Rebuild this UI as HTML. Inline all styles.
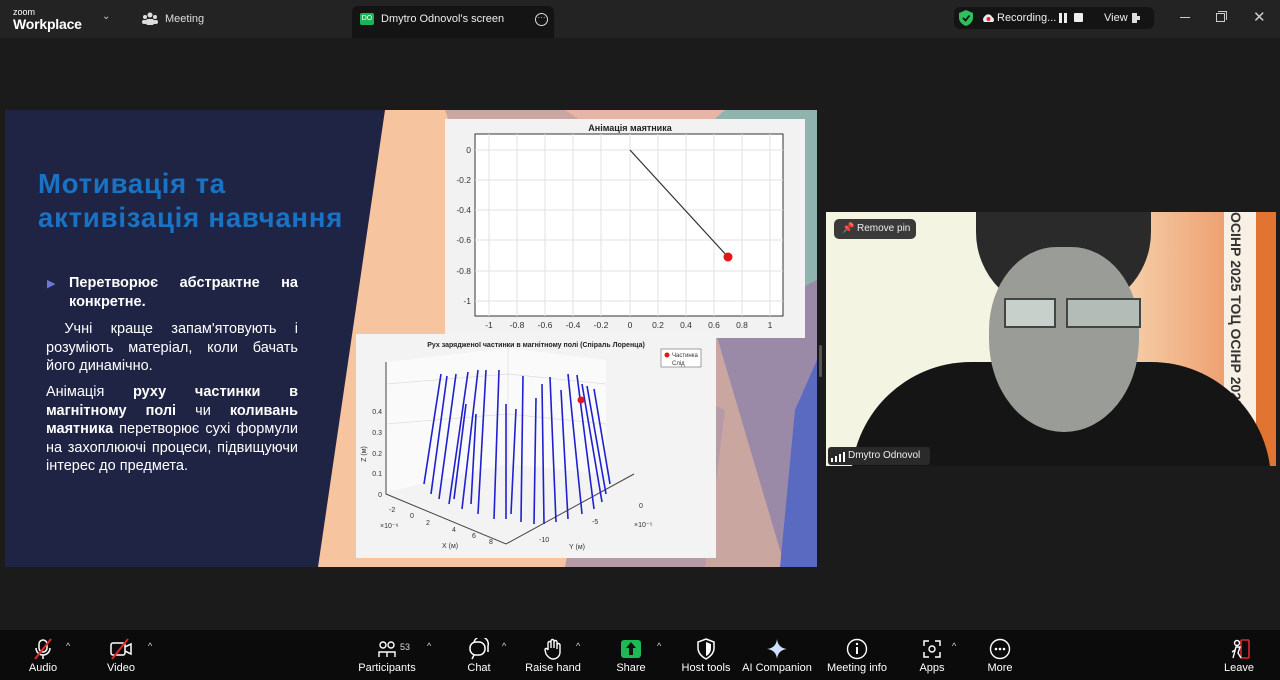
<!DOCTYPE html>
<html><head><meta charset="utf-8"><style>
*{margin:0;padding:0;box-sizing:border-box}
body{width:1280px;height:680px;background:#1b1b1b;font-family:"Liberation Sans",sans-serif;position:relative;overflow:hidden;color:#fff}
.top{position:absolute;left:0;top:0;width:1280px;height:38px;background:#232323}
.abs{position:absolute}
.bot{position:absolute;left:0;top:630px;width:1280px;height:50px;background:#0b0b0b}
.tb{position:absolute;top:662px;font-size:11px;color:#fff;text-align:center;transform:translateX(-50%);white-space:nowrap}
.ic{position:absolute;top:638px;transform:translateX(-50%)}
.car{position:absolute;top:641px;font-size:9px;color:#ddd}
.slide{position:absolute;left:5px;top:110px;width:812px;height:457px;overflow:hidden;background:#f7c4a0}
.txt{position:absolute;left:46px;width:252px;font-size:14.5px;line-height:18.5px;color:#fff;text-align:justify}
</style></head><body>
<div class="top"></div>
<div class="abs" style="left:13px;top:7px;font-size:9px;color:#fff">zoom</div>
<div class="abs" style="left:13px;top:16px;font-size:14px;color:#fff;font-weight:bold;letter-spacing:-.2px">Workplace</div>
<div class="abs" style="left:102px;top:11px;font-size:10px;color:#ccc">⌄</div>
<svg class="abs" style="left:142px;top:12px" width="16" height="14"><circle cx="8" cy="3" r="2.5" fill="#ddd"/><circle cx="3" cy="5" r="2" fill="#ddd"/><circle cx="13" cy="5" r="2" fill="#ddd"/><rect x="4" y="7" width="8" height="6" rx="2" fill="#ddd"/><rect x="0" y="8" width="5" height="4" rx="2" fill="#ddd"/><rect x="11" y="8" width="5" height="4" rx="2" fill="#ddd"/></svg>
<div class="abs" style="left:165px;top:13px;font-size:11px;color:#ddd">Meeting</div>
<div class="abs" style="left:352px;top:6px;width:202px;height:32px;background:#141414;border-radius:6px 6px 0 0"></div>
<div class="abs" style="left:360px;top:13px;width:14px;height:12px;background:#1fb05a;border-radius:2px;font-size:7px;color:#fff;text-align:center;line-height:12px">DO</div>
<div class="abs" style="left:381px;top:13px;font-size:11px;color:#eee">Dmytro Odnovol's screen</div>
<div class="abs" style="left:535px;top:13px;width:13px;height:13px;border:1.3px solid #ddd;border-radius:50%;font-size:8px;line-height:7px;text-align:center;color:#ddd">···</div>
<div class="abs" style="left:954px;top:7px;width:200px;height:22px;background:#141414;border-radius:6px"></div>
<svg class="abs" style="left:959px;top:10px" width="14" height="16"><path d="M7 0L14 3V8C14 12 10 15 7 16C4 15 0 12 0 8V3Z" fill="#2ec05a"/><path d="M4 8L6.5 10.5L10.5 5.5" stroke="#111" stroke-width="1.8" fill="none"/></svg>
<svg class="abs" style="left:982px;top:13px" width="12" height="10"><path d="M2 9A4 4 0 0 1 3 3A4 4 0 0 1 10 4A3 3 0 0 1 11 9Z" fill="#eee"/><circle cx="6.5" cy="6" r="2" fill="#e23"/></svg>
<div class="abs" style="left:997px;top:12px;font-size:11px;color:#eee">Recording...</div>
<div class="abs" style="left:1059px;top:13px;width:3px;height:10px;background:#eee"></div><div class="abs" style="left:1064px;top:13px;width:3px;height:10px;background:#eee"></div>
<div class="abs" style="left:1074px;top:13px;width:9px;height:9px;background:#eee;border-radius:1px"></div>
<div class="abs" style="left:1104px;top:12px;font-size:11px;color:#eee">View</div>
<div class="abs" style="left:1132px;top:13px;width:5px;height:10px;background:#ddd"></div><div class="abs" style="left:1137px;top:16px;width:3px;height:4px;background:#ddd"></div>
<div class="abs" style="left:1180px;top:17px;width:10px;height:1px;background:#ccc"></div>
<div class="abs" style="left:1216px;top:13px;width:9px;height:9px;border:1px solid #ccc"></div><div class="abs" style="left:1218px;top:11px;width:9px;height:9px;border-top:1px solid #ccc;border-right:1px solid #ccc"></div>
<div class="abs" style="left:1253px;top:8px;font-size:15px;color:#ccc">✕</div>

<div class="slide">
<svg width="812" height="457" style="position:absolute;left:0;top:0">
<polygon points="0,0 380,0 313,457 0,457" fill="#1f2444"/>
<polygon points="440,0 812,0 812,457 600,457" fill="#c9a6a0"/>
<polygon points="700,0 812,0 812,200 740,120" fill="#8fb3ae"/>
<polygon points="560,0 720,0 650,60" fill="#e8b4a8"/>
<polygon points="710,220 812,170 812,457 780,457" fill="#9a8aa8"/>
<polygon points="790,300 812,250 812,457 775,457" fill="#5a6ac0"/>
<polygon points="600,250 720,300 700,457 560,457" fill="#b79aa8"/>
</svg>
<div class="abs" style="left:33px;top:57px;font-size:27.5px;font-weight:bold;color:#1a72c4;line-height:34px;letter-spacing:.8px">Мотивація та<br>активізація навчання</div>
<div class="abs" style="left:42px;top:167px;font-size:11px;color:#6a78d8">▶</div>
<div class="txt" style="left:64px;width:229px;top:164px;font-weight:bold;text-align-last:justify">Перетворює абстрактне на</div>
<div class="txt" style="left:64px;width:229px;top:183px;font-weight:bold">конкретне.</div>
<div class="txt" style="left:41px;top:210px">&nbsp;Учні краще запам'ятовують і розуміють матеріал, коли бачать його динамічно.</div>
<div class="txt" style="left:41px;top:273px">Анімація <b>руху частинки в магнітному полі</b> чи <b>коливань маятника</b> перетворює сухі формули на захоплюючі процеси, підвищуючи інтерес до предмета.</div>
</div>

<!-- chart 1 -->
<svg class="abs" style="left:445px;top:119px" width="360" height="219">
<rect width="360" height="219" fill="#f2f2f2"/>
<rect x="30" y="15" width="308" height="182" fill="#fff" stroke="#333"/>
<g stroke="#e2e2e2">
<line x1="44" y1="15" x2="44" y2="197"/><line x1="72" y1="15" x2="72" y2="197"/><line x1="100" y1="15" x2="100" y2="197"/><line x1="128" y1="15" x2="128" y2="197"/><line x1="156" y1="15" x2="156" y2="197"/><line x1="185" y1="15" x2="185" y2="197"/><line x1="213" y1="15" x2="213" y2="197"/><line x1="241" y1="15" x2="241" y2="197"/><line x1="269" y1="15" x2="269" y2="197"/><line x1="297" y1="15" x2="297" y2="197"/><line x1="325" y1="15" x2="325" y2="197"/>
<line x1="30" y1="31" x2="338" y2="31"/><line x1="30" y1="61" x2="338" y2="61"/><line x1="30" y1="91" x2="338" y2="91"/><line x1="30" y1="121" x2="338" y2="121"/><line x1="30" y1="152" x2="338" y2="152"/><line x1="30" y1="182" x2="338" y2="182"/>
</g>
<line x1="185" y1="31" x2="283" y2="138" stroke="#333" stroke-width="1.2"/>
<circle cx="283" cy="138" r="4.5" fill="#e01818"/>
<text x="185" y="12" font-size="9" font-weight="bold" text-anchor="middle" fill="#222" font-family="Liberation Sans">Анімація маятника</text>
<g font-size="8.5" fill="#333" font-family="Liberation Sans" text-anchor="end">
<text x="26" y="34">0</text><text x="26" y="64">-0.2</text><text x="26" y="94">-0.4</text><text x="26" y="124">-0.6</text><text x="26" y="155">-0.8</text><text x="26" y="185">-1</text></g>
<g font-size="8.5" fill="#333" font-family="Liberation Sans" text-anchor="middle">
<text x="44" y="209">-1</text><text x="72" y="209">-0.8</text><text x="100" y="209">-0.6</text><text x="128" y="209">-0.4</text><text x="156" y="209">-0.2</text><text x="185" y="209">0</text><text x="213" y="209">0.2</text><text x="241" y="209">0.4</text><text x="269" y="209">0.6</text><text x="297" y="209">0.8</text><text x="325" y="209">1</text></g>
</svg>

<!-- chart 2 -->
<svg class="abs" style="left:356px;top:334px" width="360" height="224" font-family="Liberation Sans">
<rect width="360" height="224" fill="#f3f3f3"/>
<polygon points="30,28 152,14 250,26 250,140 152,130 30,158" fill="#fafafa"/>
<g stroke="#ddd" stroke-width=".7" fill="none"><line x1="152" y1="14" x2="152" y2="130"/><line x1="30" y1="50" x2="152" y2="40"/><line x1="152" y1="40" x2="250" y2="50"/><line x1="30" y1="90" x2="152" y2="80"/><line x1="152" y1="80" x2="250" y2="90"/></g>
<polyline points="30,28 30,160 150,210 278,140" stroke="#444" fill="none"/>
<g stroke="#2020d0" stroke-width="1.6">
<line x1="68" y1="150" x2="85" y2="40"/><line x1="75" y1="160" x2="91" y2="42"/><line x1="83" y1="165" x2="100" y2="40"/><line x1="93" y1="170" x2="112" y2="38"/><line x1="106" y1="175" x2="122" y2="36"/><line x1="122" y1="180" x2="130" y2="36"/><line x1="138" y1="185" x2="143" y2="36"/><line x1="150" y1="185" x2="150" y2="70"/><line x1="165" y1="188" x2="167" y2="42"/><line x1="178" y1="190" x2="180" y2="64"/><line x1="188" y1="190" x2="186" y2="50"/><line x1="200" y1="188" x2="194" y2="43"/><line x1="212" y1="185" x2="205" y2="56"/><line x1="226" y1="180" x2="212" y2="40"/><line x1="238" y1="175" x2="221" y2="41"/><line x1="246" y1="168" x2="226" y2="50"/><line x1="250" y1="160" x2="231" y2="52"/><line x1="254" y1="150" x2="238" y2="55"/><line x1="155" y1="180" x2="160" y2="75"/><line x1="115" y1="170" x2="120" y2="80"/><line x1="98" y1="165" x2="110" y2="70"/></g>
<circle cx="225" cy="66" r="3.5" fill="#e01818"/>
<text x="180" y="13" font-size="7" font-weight="bold" text-anchor="middle" fill="#222">Рух зарядженої частинки в магнітному полі (Спіраль Лоренца)</text>
<rect x="305" y="15" width="40" height="18" fill="#fff" stroke="#666" stroke-width=".6"/>
<circle cx="311" cy="21" r="2.5" fill="#e01818"/>
<text x="316" y="23" font-size="6" fill="#333">Частинка</text><text x="316" y="31" font-size="6" fill="#333">Слід</text>
<g font-size="7" fill="#333" text-anchor="end"><text x="26" y="80">0.4</text><text x="26" y="101">0.3</text><text x="26" y="122">0.2</text><text x="26" y="142">0.1</text><text x="26" y="163">0</text></g>
<text x="10" y="120" font-size="7" fill="#333" transform="rotate(-90 10 120)" text-anchor="middle">Z (м)</text>
<g font-size="7" fill="#333"><text x="33" y="178">-2</text><text x="54" y="184">0</text><text x="70" y="191">2</text><text x="96" y="198">4</text><text x="116" y="204">6</text><text x="133" y="210">8</text><text x="24" y="194">×10⁻⁶</text><text x="86" y="214">X (м)</text><text x="183" y="208">-10</text><text x="236" y="190">-5</text><text x="283" y="174">0</text><text x="278" y="193">×10⁻⁵</text><text x="213" y="215">Y (м)</text></g>
</svg>

<!-- video -->
<div class="abs" style="left:826px;top:212px;width:450px;height:254px;background:#f4f4e2;overflow:hidden">
<div class="abs" style="left:282px;top:0;width:118px;height:254px;background:linear-gradient(90deg,#f6d8b4,#eea070)"></div>
<div class="abs" style="left:398px;top:0;width:32px;height:254px;background:#f8f0e4"></div>
<div class="abs" style="left:430px;top:0;width:20px;height:254px;background:#e07430"></div>
<div class="abs" style="left:402px;top:0;height:254px;font-size:14px;font-weight:bold;color:#333;writing-mode:vertical-rl;white-space:nowrap;overflow:hidden">ОСІНР 2025 ТОЦ ОСІНР 2025 ТОЦ</div>
<div class="abs" style="left:25px;top:150px;width:420px;height:200px;background:#151515;border-radius:120px 120px 0 0"></div>
<div class="abs" style="left:150px;top:0;width:175px;height:100px;background:#2a2a2a;border-radius:0 0 80px 80px"></div>
<div class="abs" style="left:163px;top:35px;width:150px;height:185px;background:#9a9c98;border-radius:45% 45% 50% 50%"></div>
<div class="abs" style="left:178px;top:86px;width:52px;height:30px;background:#c8d0cc;border:2px solid #444"></div>
<div class="abs" style="left:240px;top:86px;width:75px;height:30px;background:#b4bcb8;border:2px solid #444"></div>
<div class="abs" style="left:8px;top:7px;width:82px;height:20px;background:#3a3a3a;border-radius:5px;font-size:10px;color:#eee;line-height:20px;padding-left:23px">Remove pin</div>
<div class="abs" style="left:16px;top:11px;font-size:10px;color:#eee">📌</div>
<div class="abs" style="left:2px;top:235px;width:102px;height:18px;background:#2a2a2a;border-radius:3px;font-size:10px;color:#eee;line-height:18px;padding-left:20px">Dmytro Odnovol</div>
<svg class="abs" style="left:5px;top:240px" width="14" height="10"><rect x="0" y="6" width="2" height="4" fill="#fff"/><rect x="4" y="4" width="2" height="6" fill="#fff"/><rect x="8" y="2" width="2" height="8" fill="#fff"/><rect x="12" y="0" width="2" height="10" fill="#fff"/></svg>
</div>
<div class="abs" style="left:819px;top:345px;width:3px;height:32px;background:#555;border-radius:2px"></div>

<div class="bot"></div>
<svg class="ic" style="left:43px" width="22" height="22"><rect x="7" y="2" width="8" height="12" rx="4" fill="none" stroke="#fff" stroke-width="1.5"/><path d="M4 10A7 7 0 0 0 18 10M11 17V21" stroke="#fff" stroke-width="1.5" fill="none"/><line x1="3" y1="21" x2="19" y2="1" stroke="#e02828" stroke-width="2"/></svg>
<svg class="ic" style="left:121px" width="24" height="22"><rect x="2" y="5" width="14" height="12" rx="2" fill="none" stroke="#fff" stroke-width="1.5"/><path d="M16 9L22 6V16L16 13" stroke="#fff" stroke-width="1.5" fill="none"/><line x1="3" y1="21" x2="19" y2="1" stroke="#e02828" stroke-width="2"/></svg>
<svg class="ic" style="left:387px;top:640px" width="18" height="20"><circle cx="5" cy="5" r="3" fill="none" stroke="#fff" stroke-width="1.4"/><circle cx="13" cy="5" r="3" fill="none" stroke="#fff" stroke-width="1.4"/><path d="M1 17V12H9V17M9 12H17V17" stroke="#fff" stroke-width="1.4" fill="none"/></svg>
<div class="abs" style="left:400px;top:642px;font-size:9px;color:#ddd">53</div>
<svg class="ic" style="left:479px" width="22" height="22"><rect x="2" y="4" width="15" height="13" rx="6" fill="none" stroke="#fff" stroke-width="1.5"/><path d="M6 4A6 6 0 0 1 20 8V14" stroke="#fff" stroke-width="1.5" fill="none"/><path d="M6 17L4 21" stroke="#fff" stroke-width="1.5"/></svg>
<svg class="ic" style="left:553px" width="20" height="22"><path d="M5 12V5A1.5 1.5 0 0 1 8 5V10V3A1.5 1.5 0 0 1 11 3V10V4A1.5 1.5 0 0 1 14 4V11V7A1.5 1.5 0 0 1 17 7V14C17 18 14 21 10 21C7 21 5 19 3 16L2 12C2 10 4 10 5 12" fill="none" stroke="#fff" stroke-width="1.4"/></svg>
<div class="ic" style="left:631px;top:640px;width:20px;height:18px;background:#1db954;border-radius:3px"></div>
<svg class="ic" style="left:631px;top:641px" width="12" height="15"><path d="M6 1L1 7H4V14H8V7H11Z" fill="#111"/></svg>
<svg class="ic" style="left:706px" width="20" height="22"><path d="M10 1L18 4V10C18 15 14 19 10 21C6 19 2 15 2 10V4Z" fill="none" stroke="#fff" stroke-width="1.5"/><path d="M10 4V18A8 8 0 0 0 15 10V6Z" fill="#fff"/></svg>
<svg class="ic" style="left:777px" width="22" height="22"><path d="M11 1Q12 10 21 11Q12 12 11 21Q10 12 1 11Q10 10 11 1Z" fill="#cfe0ff"/></svg>
<svg class="ic" style="left:857px" width="22" height="22"><circle cx="11" cy="11" r="9.5" fill="none" stroke="#fff" stroke-width="1.4"/><rect x="10" y="9" width="2" height="7" fill="#fff"/><circle cx="11" cy="6" r="1.2" fill="#fff"/></svg>
<svg class="ic" style="left:932px" width="22" height="22"><path d="M3 8V3H8M14 3H19V8M3 14V19H8M14 19H19V14" stroke="#fff" stroke-width="1.5" fill="none"/><circle cx="11" cy="11" r="3" fill="none" stroke="#fff" stroke-width="1.4"/></svg>
<svg class="ic" style="left:1000px" width="22" height="22"><circle cx="11" cy="11" r="9.5" fill="none" stroke="#fff" stroke-width="1.4"/><circle cx="7" cy="11" r="1.3" fill="#fff"/><circle cx="11" cy="11" r="1.3" fill="#fff"/><circle cx="15" cy="11" r="1.3" fill="#fff"/></svg>
<svg class="ic" style="left:1240px" width="22" height="22"><rect x="12" y="2" width="8" height="18" rx="1" fill="none" stroke="#e02828" stroke-width="1.6"/><circle cx="8" cy="5" r="2.5" fill="none" stroke="#fff" stroke-width="1.4"/><path d="M4 20L7 9H11L9 15L12 20M6 12L3 14" stroke="#fff" stroke-width="1.4" fill="none"/></svg>
<div class="car" style="left:66px">^</div><div class="car" style="left:148px">^</div><div class="car" style="left:427px">^</div><div class="car" style="left:502px">^</div><div class="car" style="left:576px">^</div><div class="car" style="left:657px">^</div><div class="car" style="left:952px">^</div>
<div class="tb" style="left:43px">Audio</div><div class="tb" style="left:121px">Video</div><div class="tb" style="left:387px">Participants</div><div class="tb" style="left:479px">Chat</div><div class="tb" style="left:553px">Raise hand</div><div class="tb" style="left:631px">Share</div><div class="tb" style="left:706px">Host tools</div><div class="tb" style="left:777px">AI Companion</div><div class="tb" style="left:857px">Meeting info</div><div class="tb" style="left:932px">Apps</div><div class="tb" style="left:1000px">More</div><div class="tb" style="left:1239px">Leave</div>
</body></html>
